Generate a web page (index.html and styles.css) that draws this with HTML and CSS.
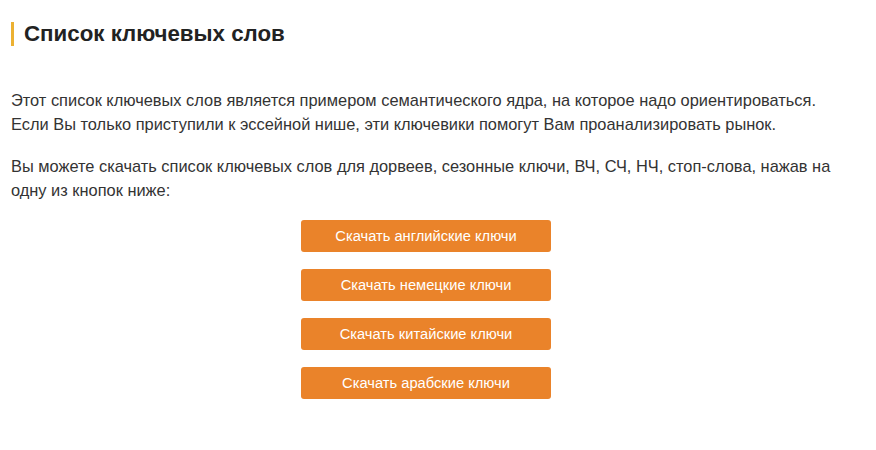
FILE: index.html
```html
<!DOCTYPE html>
<html lang="ru">
<head>
  <meta charset="UTF-8" />
  <meta name="viewport" content="width=device-width, initial-scale=1" />
  <title>Список ключевых слов</title>
  <link rel="stylesheet" href="styles.css">
</head>
<body>
  <div class="container">
    <h2 class="title">Список ключевых слов</h2>
    <p>Этот список ключевых слов является примером семантического ядра, на которое надо ориентироваться. Если Вы только приступили к эссейной нише, эти ключевики помогут Вам проанализировать рынок.</p>
    <p>Вы можете скачать список ключевых слов для дорвеев, сезонные ключи, ВЧ, СЧ, НЧ, стоп-слова, нажав на одну из кнопок ниже:</p>

    <div class="buttons">
      <button>Скачать английские ключи</button>
      <button>Скачать немецкие ключи</button>
      <button>Скачать китайские ключи</button>
      <button>Скачать арабские ключи</button>
    </div>
  </div>
</body>
</html>
```

FILE: styles.css
```css
body {
  font-family: "Liberation Sans", Arial, sans-serif;
  background: #fff;
  margin: 0;
  color: #333;
}
.container {
  width: 830px;
  padding: 22px 11px 0 11px;
}
.title {
  margin: 0 0 42px 0;
  padding-left: 10px;
  border-left: 3px solid #ecb132;
  font-size: 22.3px;
  line-height: 24px;
  color: #222;
}
p {
  font-size: 16.4px;
  line-height: 24px;
  margin: 0 0 18px 0;
}
.buttons {
  display: flex;
  flex-direction: column;
  align-items: center;
  gap: 17px;
  margin-top: 0;
}
button {
  width: 250px;
  height: 32px;
  background-color: #ea832a;
  color: #fff;
  border: none;
  border-radius: 3px;
  font-family: "Liberation Sans", Arial, sans-serif;
  font-size: 14.7px;
  cursor: pointer;
}
```
